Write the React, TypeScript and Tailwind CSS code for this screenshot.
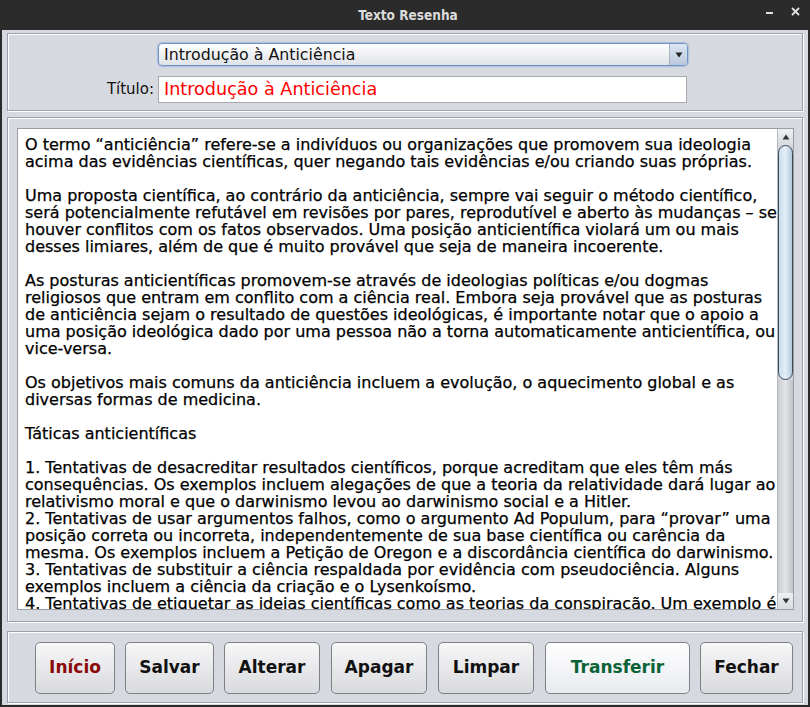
import React from "react";

const lines: string[] = [
  "O termo “anticiência” refere-se a indivíduos ou organizações que promovem sua ideologia",
  "acima das evidências científicas, quer negando tais evidências e/ou criando suas próprias.",
  "",
  "Uma proposta científica, ao contrário da anticiência, sempre vai seguir o método científico,",
  "será potencialmente refutável em revisões por pares, reprodutível e aberto às mudanças – se",
  "houver conflitos com os fatos observados. Uma posição anticientífica violará um ou mais",
  "desses limiares, além de que é muito provável que seja de maneira incoerente.",
  "",
  "As posturas anticientíficas promovem-se através de ideologias políticas e/ou dogmas",
  "religiosos que entram em conflito com a ciência real. Embora seja provável que as posturas",
  "de anticiência sejam o resultado de questões ideológicas, é importante notar que o apoio a",
  "uma posição ideológica dado por uma pessoa não a torna automaticamente anticientífica, ou",
  "vice-versa.",
  "",
  "Os objetivos mais comuns da anticiência incluem a evolução, o aquecimento global e as",
  "diversas formas de medicina.",
  "",
  "Táticas anticientíficas",
  "",
  "1. Tentativas de desacreditar resultados científicos, porque acreditam que eles têm más",
  "consequências. Os exemplos incluem alegações de que a teoria da relatividade dará lugar ao",
  "relativismo moral e que o darwinismo levou ao darwinismo social e a Hitler.",
  "2. Tentativas de usar argumentos falhos, como o argumento Ad Populum, para “provar” uma",
  "posição correta ou incorreta, independentemente de sua base científica ou carência da",
  "mesma. Os exemplos incluem a Petição de Oregon e a discordância científica do darwinismo.",
  "3. Tentativas de substituir a ciência respaldada por evidência com pseudociência. Alguns",
  "exemplos incluem a ciência da criação e o Lysenkoísmo.",
  "4. Tentativas de etiquetar as ideias científicas como as teorias da conspiração. Um exemplo é",
];

const buttons: { label: string; cls: string; color: string; light?: boolean }[] = [
  { label: "Início", cls: "w-[80px]", color: "text-[#8b0a0a]" },
  { label: "Salvar", cls: "w-[89px] ml-[10px]", color: "text-[#111]" },
  { label: "Alterar", cls: "w-[96px] ml-[10px]", color: "text-[#111]" },
  { label: "Apagar", cls: "w-[96px] ml-[11px]", color: "text-[#111]" },
  { label: "Limpar", cls: "w-[96px] ml-[11px]", color: "text-[#111]" },
  { label: "Transferir", cls: "w-[145px] ml-[11px]", color: "text-[#0b6236]", light: true },
  { label: "Fechar", cls: "w-[93px] ml-[10px]", color: "text-[#111]" },
];

const dv = { fontFamily: '"DejaVu Sans", Verdana, sans-serif' };

export default function App() {
  return (
    <div className="w-[810px] h-[707px] bg-[#2b2b2b] flex flex-col" style={dv}>
      {/* title bar */}
      <div className="h-[30px] flex items-center relative shrink-0">
        <div
          className="flex-1 text-center text-[13.5px] font-bold text-[#dcdcdc] pl-[6px]"
          style={{ fontFamily: '"DejaVu Sans Condensed", "DejaVu Sans", sans-serif' }}
        >
          Texto Resenha
        </div>
        <div className="absolute right-[10px] top-[7px] flex items-center gap-[18px] text-[#dcdcdc]">
          <div className="w-[7px] h-[2px] bg-[#e0e0e0] mt-[2px]" />
          <svg width="9" height="9" viewBox="0 0 9 9">
            <path d="M1 1 L8 8 M8 1 L1 8" stroke="#e0e0e0" strokeWidth="1.8" />
          </svg>
        </div>
      </div>

      {/* body */}
      <div className="flex-1 mx-[2px] mb-[2px] bg-[#d6d9df] flex flex-col px-[5px] pt-[3px] pb-[2px]">
        {/* panel 1 */}
        <div className="h-[78px] border border-[#9da0a5] shadow-[inset_1px_1px_0_#fff,1px_1px_0_#fff] flex flex-col pl-[150px] pt-[9px]">
          <div className="w-[530px] h-[23px] rounded-[4px] border border-[#6f93c4] shadow-[0_0_1px_1px_rgba(120,160,210,0.45)] bg-gradient-to-b from-[#ffffff] to-[#dfe2e7] flex items-stretch overflow-hidden">
            <div className="flex-1 flex items-center pl-[5px] text-[15.8px] text-[#111]">
              Introdução à Anticiência
            </div>
            <div className="w-[18px] border-l border-[#a9b4c2] bg-gradient-to-b from-[#dde6f1] to-[#b9c9dc] flex items-center justify-center">
              <svg width="8" height="6" viewBox="0 0 8 6">
                <path d="M0.5 0.5 L7.5 0.5 L4 5.5 Z" fill="#222" />
              </svg>
            </div>
          </div>
          <div className="flex items-center mt-[10px] -ml-[54px]">
            <div className="w-[50px] text-right text-[15px] text-[#111] mr-[4px]">Título:</div>
            <div className="w-[529px] h-[27px] bg-white border border-[#a7a9ad] flex items-center pl-[5px] text-[17.6px] text-[#ff0000]">
              Introdução à Anticiência
            </div>
          </div>
        </div>

        {/* panel 2 */}
        <div className="mt-[6px] h-[505px] border border-[#9da0a5] shadow-[inset_1px_1px_0_#fff,1px_1px_0_#fff] pl-[9px] pt-[10px] pr-[8px]">
          <div className="h-[482px] bg-white border border-[#9a9da2] flex">
            <div className="flex-1 overflow-hidden pl-[7px] pt-[7px] text-[16px] leading-[17px] text-black [-webkit-text-stroke:0.25px_#000]">
              {lines.map((l, i) => (
                <div key={i} className="h-[17px] whitespace-pre">
                  {l}
                </div>
              ))}
            </div>
            <div className="w-[16px] bg-[#d2d5d9] border-l border-[#b5b8bc] flex flex-col">
              <div className="h-[16px] flex items-center justify-center bg-gradient-to-b from-[#eef0f2] to-[#d8dbdf]">
                <svg width="8" height="6" viewBox="0 0 8 6">
                  <path d="M0.5 5.5 L7.5 5.5 L4 0.5 Z" fill="#333" />
                </svg>
              </div>
              <div className="h-[235px] rounded-t-[9px] rounded-b-[9px] border border-[#3d4a5a] bg-gradient-to-r from-[#c8dbee] via-[#e4eef8] to-[#b3c8dd]" />
              <div className="flex-1 bg-gradient-to-r from-[#c9ccd0] via-[#e2e4e7] to-[#bfc2c6]" />
              <div className="h-[16px] flex items-center justify-center bg-gradient-to-b from-[#eef0f2] to-[#d8dbdf]">
                <svg width="8" height="6" viewBox="0 0 8 6">
                  <path d="M0.5 0.5 L7.5 0.5 L4 5.5 Z" fill="#333" />
                </svg>
              </div>
            </div>
          </div>
        </div>

        {/* panel 3 */}
        <div className="mt-[9px] flex-1 border border-[#9da0a5] shadow-[inset_1px_1px_0_#fff,1px_1px_0_#fff] flex items-start pl-[27px] pt-[10px]">
          {buttons.map((b) => (
            <div
              key={b.label}
              className={`${b.cls} h-[52px] rounded-[5px] border border-[#7d8085] flex items-center justify-center text-[17px] font-bold ${b.color} ${
                b.light
                  ? "bg-gradient-to-b from-[#ffffff] to-[#e8eaee]"
                  : "bg-gradient-to-b from-[#f7f7f8] to-[#d9dadd]"
              }`}
            >
              {b.label}
            </div>
          ))}
        </div>
      </div>
    </div>
  );
}
